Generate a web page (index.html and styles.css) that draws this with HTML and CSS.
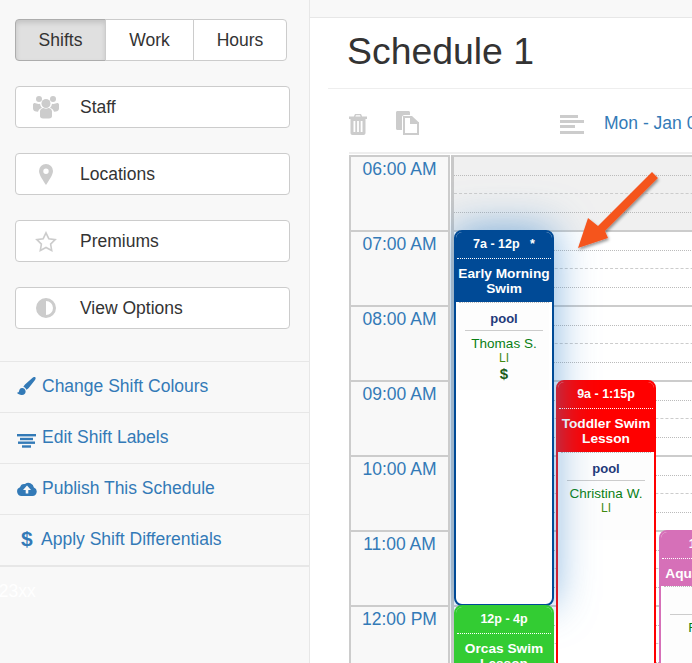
FILE: index.html
```html
<!DOCTYPE html>
<html lang="en">
<head>
<meta charset="utf-8">
<title>Schedule 1</title>
<link rel="stylesheet" href="styles.css">
</head>
<body>
<div class="page">
  <aside class="sidebar">
    <div class="tabs">
      <button class="tab tab-shifts active">Shifts</button>
      <button class="tab tab-work">Work</button>
      <button class="tab tab-hours">Hours</button>
    </div>
    <div class="filters">
      <button class="filter">
        <span class="filter-icon"><svg width="26" height="24" viewBox="0 0 26 24"><g fill="#ccc"><circle cx="6" cy="4" r="3"/><circle cx="20" cy="4" r="3"/><circle cx="13" cy="8.500" r="4.500"/><path d="M0 9.500C0 8 2 7.500 3.500 8.500c1 .6 2.500.6 3.500.2.300 2 1 3 2 4-2 .8-3.500 2-4 4-3 0-5-1-5-3.200z"/><path d="M26 9.500c0-1.500-2-2-3.500-1-1 .6-2.500.6-3.500.2-.3 2-1 3-2 4 2 .8 3.500 2 4 4 3 0 5-1 5-3.200z"/><path d="M7 16.500c0-2 2-3.500 3.500-3.500 1.500 1 3.500 1 5 0 1.500 0 3.500 1.500 3.500 3.500V21c0 1.500-1 2.500-3 2.500h-6c-2 0-3-1-3-2.500z"/></g></svg></span>
        Staff
      </button>
      <button class="filter">
        <span class="filter-icon"><svg width="14" height="21" viewBox="0 0 14 21"><path fill="#ccc" fill-rule="evenodd" d="M7 0a7 7 0 0 1 7 7c0 4-4.500 10-7 14C4.500 17 0 11 0 7a7 7 0 0 1 7-7zm0 4.500a2.700 2.700 0 1 0 0 5.400 2.700 2.700 0 0 0 0-5.400z"/></svg></span>
        Locations
      </button>
      <button class="filter">
        <span class="filter-icon"><svg width="22" height="21" viewBox="0 0 22 21"><path fill="none" stroke="#ccc" stroke-width="1.600" d="M11 1.800l2.800 5.900 6.400.9-4.600 4.500 1.100 6.400L11 16.500l-5.700 3 1.100-6.400L1.800 8.600l6.400-.9z"/></svg></span>
        Premiums
      </button>
      <button class="filter">
        <span class="filter-icon"><svg width="20" height="20" viewBox="0 0 20 20"><circle cx="10" cy="10" r="8.500" fill="none" stroke="#ccc" stroke-width="3"/><path fill="#ccc" d="M10 1a9 9 0 0 0 0 18z"/></svg></span>
        View Options
      </button>
    </div>
    <nav class="links">
      <a class="link"><span class="link-icon"><svg width="19" height="19" viewBox="0 0 19 19"><path fill="#337ab7" d="M18.300.300c-.8-.6-1.800-.3-2.700.4L8 7.500c-.8.800-1.300 1.500-1.600 2.500 1.500.300 2.500 1.300 2.800 2.700 1-.3 1.800-1 2.500-1.800L18 3c.7-.9.900-2 .3-2.700zM5 11c-2 .2-2.600 1.600-2.900 3-.2 1-.8 1.600-2.100 1.800 1 1.600 3 2.200 5 2.100 2.500-.2 4-1.700 3.500-4.100C8.200 12 6.700 10.800 5 11z"/></svg></span>Change Shift Colours</a>
      <a class="link"><span class="link-icon link-icon-low"><svg width="19" height="14" viewBox="0 0 19 14"><g fill="#337ab7"><rect width="19" height="2.400"/><rect x="3" y="3.800" width="13" height="2.400"/><rect x="1" y="7.500" width="17" height="2.400"/><rect x="5" y="11.300" width="9" height="2.400"/></g></svg></span>Edit Shift Labels</a>
      <a class="link"><span class="link-icon"><svg width="20" height="15" viewBox="0 0 20 15"><path fill="#337ab7" fill-rule="evenodd" d="M4.500 15A4.500 4.500 0 0 1 3 6.300 4.500 4.500 0 0 1 8 3a5.500 5.500 0 0 1 8.900 3.500A4.400 4.400 0 0 1 15.500 15zM10 4.500L6 9h2.700v3.500h2.600V9H14z"/></svg></span>Publish This Schedule</a>
      <a class="link link-last"><span class="link-icon link-dollar">$</span>Apply Shift Differentials</a>
    </nav>
    <div class="hidden-note">123xx</div>
  </aside>

  <main class="main">
    <h1 class="title">Schedule 1</h1>
    <div class="toolbar">
      <svg class="tool-trash" width="18" height="21" viewBox="0 0 18 21"><path fill="#ccc" fill-rule="evenodd" d="M6 0h6l1.200 2.500H18v2.500h-1.500v14c0 1.200-.8 2-2 2h-11c-1.200 0-2-.8-2-2V5H0V2.500h4.800zM7 1.300L6.400 2.500h5.200L11 1.300zM4.500 7v11h1.800V7zm3.600 0v11h1.800V7zm3.600 0v11h1.800V7z"/></svg>
      <svg class="tool-copy" width="24" height="24" viewBox="0 0 24 24"><path fill="#ccc" d="M0 1.500C0 .6.600 0 1.500 0h11c.9 0 1.500.6 1.500 1.500V4H8.500C7 4 6 5 6 6.500V19H1.500C.6 19 0 18.400 0 17.500z"/><path fill="#fff" stroke="#ccc" stroke-width="2" d="M8 6h7v6h7v11H8z"/><path fill="#ccc" d="M16 5l7 6.500h-7z"/></svg>
      <svg class="tool-align" width="24" height="19" viewBox="0 0 24 19"><g fill="#ccc"><rect width="18" height="3"/><rect y="5" width="24" height="3"/><rect y="10" width="15" height="3"/><rect y="16" width="24" height="3"/></g></svg>
      <a class="date">Mon - Jan 07</a>
    </div>
    <div class="calendar">
      <div class="times">
        <div class="time">06:00 AM</div>
        <div class="time">07:00 AM</div>
        <div class="time">08:00 AM</div>
        <div class="time">09:00 AM</div>
        <div class="time">10:00 AM</div>
        <div class="time">11:00 AM</div>
        <div class="time">12:00 PM</div>
      </div>
      <div class="day">
        <div class="hour closed"><i class="q"></i><i class="q dash"></i><i class="q"></i><i class="q end"></i></div>
        <div class="hour"><i class="q"></i><i class="q dash"></i><i class="q"></i><i class="q end"></i></div>
        <div class="hour"><i class="q"></i><i class="q dash"></i><i class="q"></i><i class="q end"></i></div>
        <div class="hour"><i class="q"></i><i class="q dash"></i><i class="q"></i><i class="q end"></i></div>
        <div class="hour"><i class="q"></i><i class="q dash"></i><i class="q"></i><i class="q end"></i></div>
        <div class="hour"><i class="q"></i><i class="q dash"></i><i class="q"></i><i class="q end"></i></div>
        <div class="hour"><i class="q"></i><i class="q dash"></i><i class="q"></i><i class="q end"></i></div>

        <article class="shift shift-red">
          <header class="shift-head">
            <div class="shift-time">9a - 1:15p</div>
            <div class="shift-name">Toddler Swim Lesson</div>
          </header>
          <div class="shift-info">
            <div class="shift-pool">pool</div>
            <div class="shift-person">Christina W.</div>
            <div class="shift-li">LI</div>
          </div>
        </article>

        <article class="shift shift-pink">
          <header class="shift-head">
            <div class="shift-time">1p - 5p</div>
            <div class="shift-name">Aquafit Class</div>
          </header>
          <div class="shift-info">
            <div class="shift-pool">pool</div>
            <div class="shift-person">Fay M.</div>
          </div>
        </article>

        <article class="shift shift-blue">
          <header class="shift-head">
            <div class="shift-time">7a - 12p &nbsp;&nbsp;*</div>
            <div class="shift-name">Early Morning Swim</div>
          </header>
          <div class="shift-info">
            <div class="shift-pool">pool</div>
            <div class="shift-person">Thomas S.</div>
            <div class="shift-li">LI</div>
            <div class="shift-pay">$</div>
          </div>
        </article>

        <article class="shift shift-green">
          <header class="shift-head">
            <div class="shift-time">12p - 4p</div>
            <div class="shift-name">Orcas Swim Lesson</div>
          </header>
        </article>

        <svg class="arrow" width="110" height="110" viewBox="0 0 110 110"><defs><filter id="arrow-shadow" x="-20%" y="-20%" width="140%" height="140%"><feDropShadow dx="1" dy="2" stdDeviation="1.500" flood-color="#000" flood-opacity=".4"/></filter></defs><path fill="#f5541f" filter="url(#arrow-shadow)" d="M8 95L18 65l10 8 54-54 6 6-53 53 3 7z"/></svg>
      </div>
    </div>
  </main>
</div>
</body>
</html>
```

FILE: styles.css
```css
* { box-sizing: border-box; }

html, body {
  margin: 0;
  height: 100%;
  overflow: hidden;
}

body {
  background: #f8f8f8;
  color: #333;
  font-family: "Liberation Sans", Arial, sans-serif;
  font-size: 17.5px;
}

.page {
  display: flex;
  height: 663px;
  overflow: hidden;
}

/* Sidebar */
.sidebar {
  flex: 0 0 310px;
  width: 310px;
  border-right: 1px solid #e7e7e7;
  padding-top: 19px;
  overflow: hidden;
}

.tabs {
  display: flex;
  width: 272px;
  height: 42px;
  margin-left: 15px;
}

.tab {
  font: inherit;
  color: #333;
  background: #fff;
  border: 1px solid #ccc;
  padding: 0;
  margin-left: -1px;
}

.tab-shifts { width: 91px; margin-left: 0; border-radius: 4px 0 0 4px; }
.tab-work { width: 89px; }
.tab-hours { width: 94px; border-radius: 0 4px 4px 0; }

.tab.active {
  background: #e0e0e0;
  border-color: #adadad;
  box-shadow: inset 0 3px 5px rgba(0, 0, 0, .125);
}

.filters {
  display: flex;
  flex-direction: column;
  gap: 25px;
  margin: 25px 0 0 15px;
}

.filter {
  display: flex;
  align-items: center;
  width: 275px;
  height: 42px;
  padding: 0;
  font: inherit;
  color: #333;
  background: #fff;
  border: 1px solid #ccc;
  border-radius: 4px;
  text-align: left;
}

.filter-icon {
  display: flex;
  justify-content: center;
  flex: 0 0 64px;
  padding-right: 5px;
}

.links {
  margin-top: 32px;
  border-top: 1px solid #e7e7e7;
}

.link {
  display: flex;
  align-items: center;
  height: 51px;
  padding: 0 0 2px 17px;
  color: #337ab7;
  border-bottom: 1px solid #e7e7e7;
}

.link-last {
  border-bottom-width: 2px;
  height: 52px;
}

.link-icon {
  display: flex;
  flex: 0 0 25px;
  align-items: center;
}

.link-icon-low { padding-top: 8px; }

.link-dollar {
  flex-basis: 24px;
  padding-left: 4px;
  font-size: 21px;
  font-weight: bold;
}

.hidden-note {
  margin: 14px 0 0 -11px;
  color: #fff;
  line-height: 20px;
}

/* Main */
.main {
  flex: 1;
  min-width: 0;
  margin-top: 17px;
  background: #fff;
  border-top: 1px solid #e7e7e7;
  overflow: hidden;
}

.title {
  margin: 0 0 0 18px;
  padding: 12px 0 15px 19px;
  height: 71px;
  border-bottom: 1px solid #eee;
  font-size: 37.400px;
  font-weight: 400;
  line-height: 42px;
  color: #333;
}

.toolbar {
  display: flex;
  align-items: center;
  height: 65px;
  margin-left: 39px;
  padding-top: 3px;
  border-bottom: 2px solid #eee;
  white-space: nowrap;
}

.toolbar svg { flex: none; }

.tool-trash { margin-top: 4px; }
.tool-copy { margin: 2px 0 0 29px; }
.tool-align { margin: 4px 0 0 140px; }

.date {
  margin: 2px 0 0 20px;
  color: #337ab7;
}

.calendar {
  display: flex;
  margin: 1px 0 0 39px;
  width: 400px;
}

.times {
  position: relative;
  z-index: 6;
  flex: 0 0 101px;
  border-left: 2px solid #ccc;
  border-right: 2px solid #ccc;
  border-top: 2px solid #ccc;
  background: #f8f8f8;
  margin-right: 1px;
}

.time {
  height: 75px;
  padding-top: 2px;
  color: #337ab7;
  text-align: center;
  line-height: 20px;
  border-bottom: 2px solid #ccc;
}

.day {
  position: relative;
  flex: 1;
  border-left: 3px solid #c8c8c8;
  border-top: 2px solid #ccc;
}

.hour {
  display: flex;
  flex-direction: column;
  height: 75px;
}

.hour.closed { background: #f0f0f0; }

.q {
  display: block;
  flex: 1;
  border-bottom: 1px dotted #bbb;
}

.q.dash { border-bottom: 1px dashed #ccc; }
.q.end { border-bottom: 2px solid #ccc; }

/* Shift cards */
.shift {
  position: absolute;
  width: 100px;
  background: #fff;
  border: 2px solid;
  border-radius: 8px;
  overflow: hidden;
  text-align: center;
}

.shift-head {
  color: #fff;
  font-size: 13.700px;
  font-weight: bold;
  line-height: 15px;
  padding: 3px 0 0;
}

.shift-time {
  font-size: 12.500px;
  line-height: 14px;
  padding: 2px 0 7px;
  margin: 0 1px;
  border-bottom: 1px dotted #fff;
}

.shift-name { padding: 7px 0; margin: 0 -4px; }

.shift-info {
  margin: 0 3px;
  padding: 0 6px;
  min-height: 88px;
  background: #fdfdfd;
  border-top: 1px dotted #bbb;
  font-size: 13.500px;
}

.shift-pool {
  padding: 8px 0 4px;
  line-height: 15px;
  font-size: 13px;
  font-weight: bold;
  color: #1f3a7a;
  border-bottom: 1px solid #ccc;
}

.shift-person {
  margin-top: 5px;
  line-height: 16px;
  color: #0a7f14;
  white-space: nowrap;
}

.shift-li {
  color: #3f8a10;
  font-size: 12px;
  line-height: 13px;
}

.shift-pay {
  color: #1a5c1a;
  font-size: 15px;
  line-height: 18px;
  font-weight: bold;
}

.shift-blue {
  left: 0;
  top: 73px;
  height: 376px;
  border-color: #004a96;
  z-index: 3;
  box-shadow: 0 -2px 40px rgba(60, 135, 205, .65);
}
.shift-blue .shift-head { background: #004a96; height: 70px; }

.shift-red {
  left: 102px;
  top: 223px;
  height: 400px;
  border-color: #f00;
  z-index: 1;
}
.shift-red .shift-head { background: #f00; height: 70px; }

.shift-pink {
  left: 205px;
  top: 373px;
  height: 300px;
  border-color: #d670b8;
  z-index: 2;
}
.shift-pink .shift-head { background: #d670b8; height: 54px; }

.shift-green {
  left: 0;
  top: 448px;
  height: 200px;
  border-color: #3c3;
  z-index: 4;
}
.shift-green .shift-head { background: #3c3; height: 100%; }

.arrow {
  position: absolute;
  left: 116px;
  top: -4px;
  z-index: 5;
  pointer-events: none;
}
```
